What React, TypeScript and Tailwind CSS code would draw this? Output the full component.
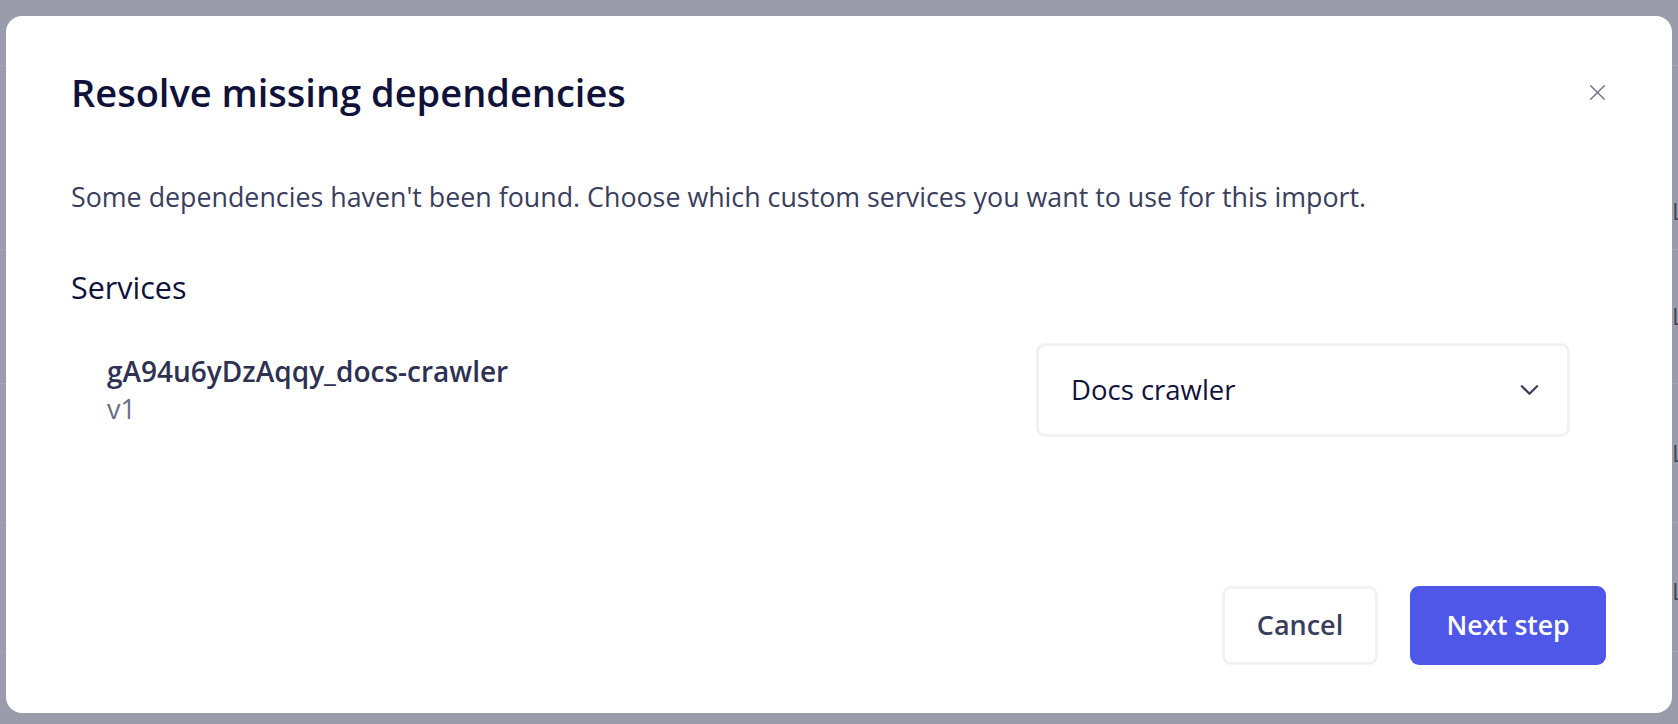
import React from 'react';

const CloseIcon: React.FC<React.SVGProps<SVGSVGElement>> = (props) => (
    <svg xmlns="http://www.w3.org/2000/svg" fill="none" viewBox="0 0 20 20" strokeWidth={1.6} stroke="currentColor" {...props}>
        <path strokeLinecap="round" d="M2 2l16 16M18 2L2 18" />
    </svg>
);

const ChevronIcon: React.FC<React.SVGProps<SVGSVGElement>> = (props) => (
    <svg xmlns="http://www.w3.org/2000/svg" fill="none" viewBox="0 0 20 12" strokeWidth={2.4} stroke="currentColor" {...props}>
        <path strokeLinecap="round" strokeLinejoin="round" d="M2 2l8 8 8-8" />
    </svg>
);

const bgRows = [211, 316, 453, 591];
const bgLines = [65, 249, 383, 522, 651];

const App: React.FC = () => {
    return (
        <div className="relative w-[1678px] h-[724px] overflow-hidden bg-[#9b9cab] font-['Open_Sans','Noto_Sans',sans-serif]">
            {/* page behind the overlay, only a sliver shows on the right */}
            {bgLines.map((y) => (
                <div key={y} className="absolute left-0 right-0 h-px bg-[#a4a5b3]" style={{ top: y }} />
            ))}
            {bgRows.map((y) => (
                <span key={y} className="absolute left-[1672px] text-[24px] leading-[32px] text-[#45475e]" style={{ top: y - 16 }}>L</span>
            ))}

            <div className="relative flex h-full pt-[16px] pb-[11px] px-[6px]">
                <div className="flex flex-1 flex-col rounded-[16px] bg-white pl-[65px] pr-[66px] pt-[52px] pb-[48px]">
                    <div className="flex items-center justify-between">
                        <h2 className="text-[38px] leading-[48px] font-semibold text-[#10123a]">Resolve missing dependencies</h2>
                        <CloseIcon className="w-[17px] h-[17px] text-[#6b6d85]" />
                    </div>

                    <p className="mt-[65px] text-[26.8px] leading-[32px] text-[#3b3d5c]">
                        Some dependencies haven't been found. Choose which custom services you want to use for this import.
                    </p>

                    <h3 className="mt-[57px] text-[30.5px] leading-[35px] font-medium text-[#10123a]">Services</h3>

                    <div className="mt-[38px] flex items-center justify-between px-[36px]">
                        <div className="flex flex-col">
                            <span className="text-[28px] leading-[37px] font-semibold text-[#2e3152]">gA94u6yDzAqqy_docs-crawler</span>
                            <span className="text-[27px] leading-[37px] text-[#6b6d85]">v1</span>
                        </div>
                        <div className="flex w-[534px] h-[94px] items-center justify-between rounded-[9px] border-[3px] border-[#f2f2f5] pl-[32px] pr-[28px]">
                            <span className="text-[27.5px] text-[#10123a]">Docs crawler</span>
                            <ChevronIcon className="w-[19px] h-[12px] text-[#3b3d5c]" />
                        </div>
                    </div>

                    <div className="mt-auto flex justify-end gap-[32px]">
                        <button className="w-[156px] h-[79px] rounded-[9px] border-[3px] border-[#f2f2f5] bg-white text-[27px] font-semibold text-[#3b3d5c]">Cancel</button>
                        <button className="w-[196px] h-[79px] rounded-[9px] bg-[#4f57e9] text-[26.5px] font-semibold text-white">Next step</button>
                    </div>
                </div>
            </div>
        </div>
    );
};

export default App;
